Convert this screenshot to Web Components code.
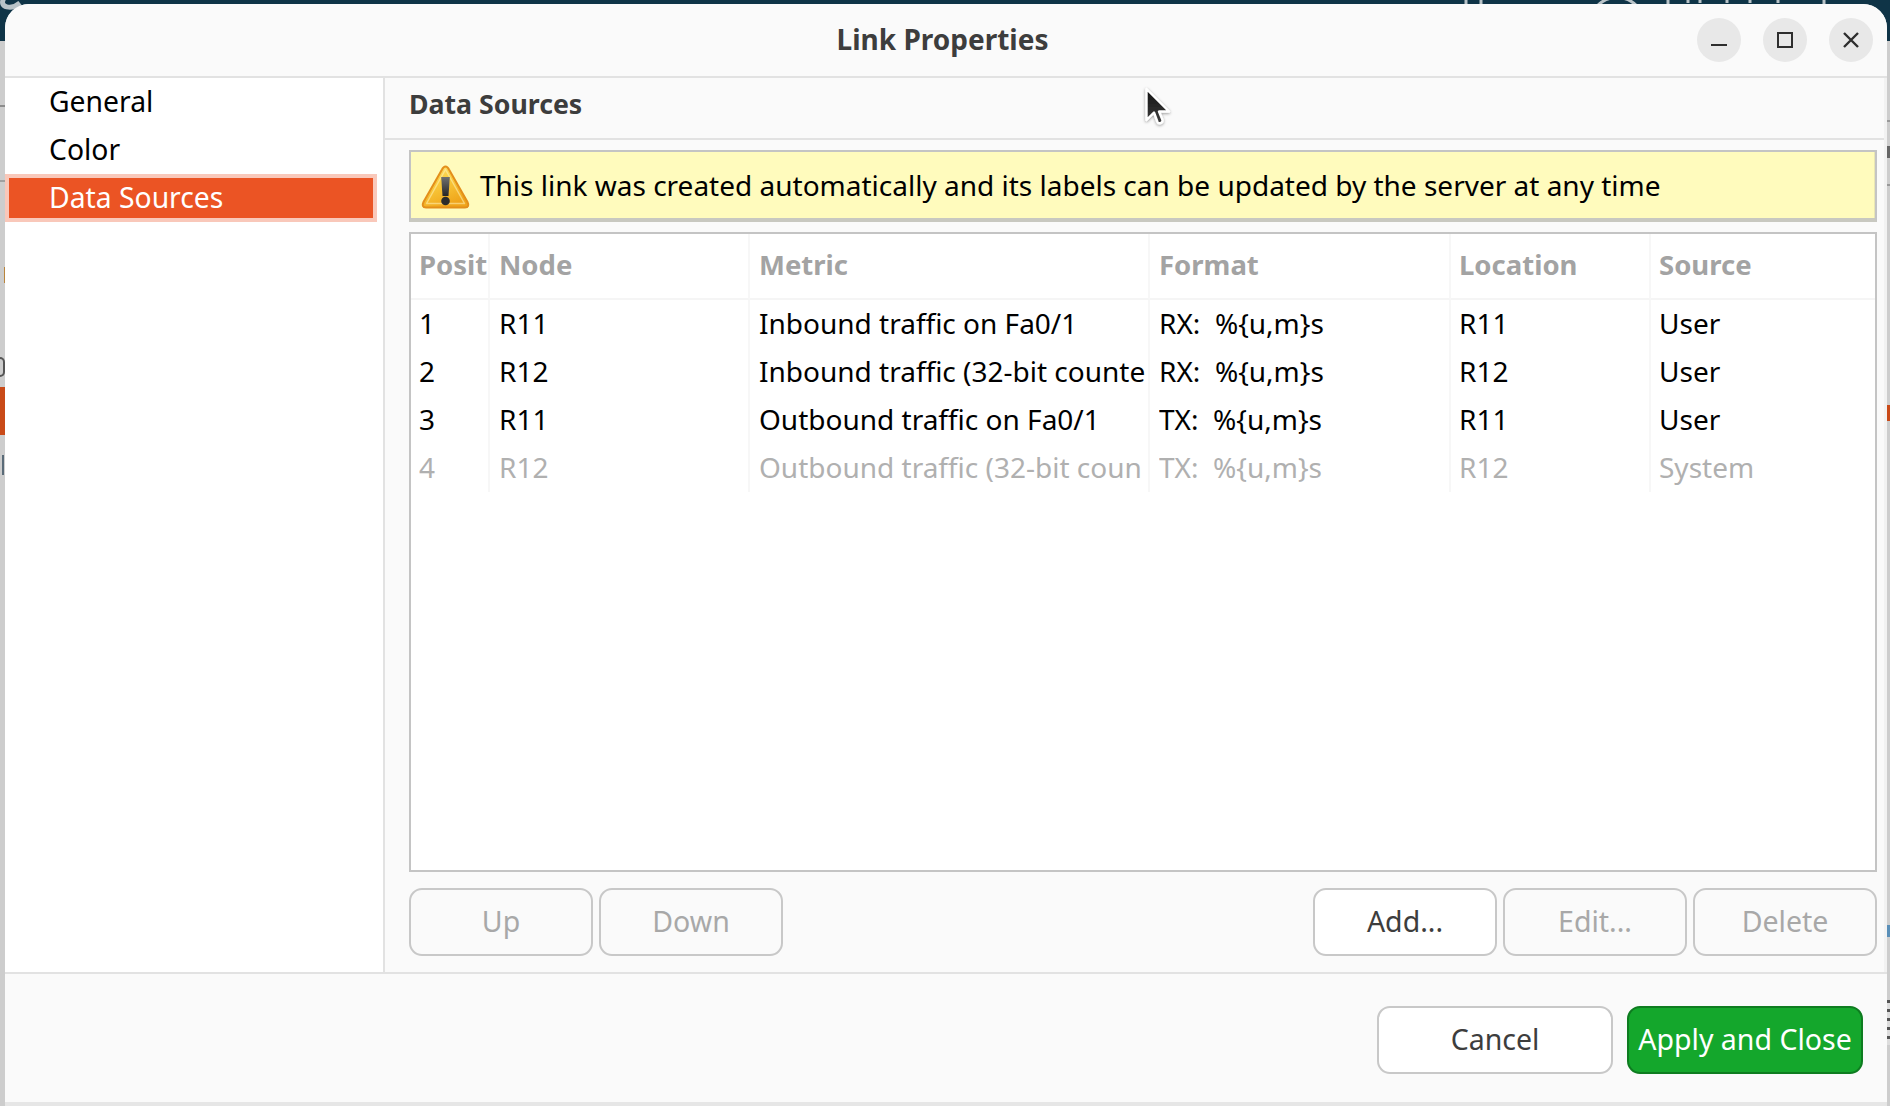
<!doctype html>
<html><head><meta charset="utf-8"><style>
html,body{margin:0;padding:0;height:100%;overflow:hidden}
body{font-family:"Noto Sans",sans-serif;background:#cdcdcd}
</style></head><body>
<app-desktop>
<link-dialog>
<win-titlebar slot="title">Link Properties</win-titlebar>
<nav-item slot="nav">General</nav-item>
<nav-item slot="nav">Color</nav-item>
<nav-item slot="nav" active>Data Sources</nav-item>
<panel-head slot="head">Data Sources</panel-head>
<warn-banner slot="banner">This link was created automatically and its labels can be updated by the server at any time</warn-banner>
<data-table slot="table"></data-table>
<ui-button slot="left" disabled>Up</ui-button>
<ui-button slot="left" disabled>Down</ui-button>
<ui-button slot="right">Add...</ui-button>
<ui-button slot="right" disabled>Edit...</ui-button>
<ui-button slot="right" disabled>Delete</ui-button>
<ui-button slot="foot" large>Cancel</ui-button>
<ui-button slot="foot" large primary>Apply and Close</ui-button>
</link-dialog>
</app-desktop>
<script>
function def(name,html,setup){customElements.define(name,class extends HTMLElement{constructor(){super();this.attachShadow({mode:'open'}).innerHTML=html;}connectedCallback(){setup&&setup.call(this,this.shadowRoot)}})}

def('app-desktop',`<style>
:host{display:block;position:relative;width:1890px;height:1106px;overflow:hidden;box-sizing:border-box;padding:4px 3px 0 5px;
background:linear-gradient(#0f3447 0,#0f3447 41px,#cdcdcd 41px)}
.bit{position:absolute;left:0;width:5px}
.or{top:387px;height:48px;background:#c94a18}
.a{top:105px;height:2px;background:#8c8c8c}
.b{top:180px;height:2px;background:#a0a0a0}
.c{top:357px;height:16px;border:2px solid #555;border-left:0;width:3px;border-radius:0 6px 6px 0}
.d{top:455px;height:20px;background:#5a6b78;width:2px;left:2px}
.e{top:267px;height:16px;background:#b8843c;width:1px;left:4px}
.r{position:absolute;right:0;width:3px}
svg.top{position:absolute;left:0;top:0}
</style>
<div class="bit or"></div><div class="bit a"></div><div class="bit b"></div><div class="bit c"></div><div class="bit d"></div><div class="bit e"></div>
<div class="r" style="top:120px;height:2px;background:#999"></div>
<div class="r" style="top:146px;height:12px;background:#666"></div>
<div class="r" style="top:184px;height:2px;background:#999"></div>
<div class="r" style="top:405px;height:16px;background:#c94a18"></div>
<div class="r" style="top:925px;height:12px;background:#5a8fb8"></div>
<div class="r" style="top:1000px;height:45px;background:repeating-linear-gradient(#555 0 3px,#ddd 3px 9px)"></div>
<svg class="top" width="1890" height="12" viewBox="0 0 1890 12" fill="none" stroke="#b9c3c8" stroke-width="3">
<path d="M4 -2C-2 8 12 10 20 3" stroke-width="5"/>
<path d="M1597 6a28 28 0 0 1 40 0"/>
<path d="M1466 0v4M1481 0v4M1668 0v4M1688 0v3M1700 0v3M1727 0v3M1750 0v3M1778 0v3M1824 0v4"/>
</svg>
<slot></slot>`);

def('link-dialog',`<style>
:host{display:flex;flex-direction:column;width:1882px;height:1102px;box-sizing:border-box;background:#fafafa;border-radius:24px 24px 0 0;overflow:hidden;border-bottom:4px solid #e6e6e6}
.body{flex:none;height:894px;display:flex;border-bottom:2px solid #e2e2e2}
.side{flex:none;width:378px;background:#fff;border-right:2px solid #e2e2e2}
.main{flex:1;display:flex;flex-direction:column;min-width:0;border-right:3px solid #f2f2f2}
.pad{padding:10px 7px 0 24px;display:flex;flex-direction:column}
.acts{display:flex;justify-content:space-between;margin-top:16px}
.grp{display:flex;gap:6px}
.foot{flex:1;display:flex;justify-content:flex-end;align-items:flex-start;gap:14px;padding:32px 24px 0 0}
::slotted([slot=table]){height:640px;margin-top:10px}
</style>
<slot name="title"></slot>
<div class="body">
<div class="side"><slot name="nav"></slot></div>
<div class="main"><slot name="head"></slot>
<div class="pad"><slot name="banner"></slot><slot name="table"></slot>
<div class="acts"><div class="grp"><slot name="left"></slot></div><div class="grp"><slot name="right"></slot></div></div></div>
</div></div>
<div class="foot"><slot name="foot"></slot></div>`);

def('win-titlebar',`<style>
:host{flex:none;display:block;position:relative;height:74px;box-sizing:border-box;border-bottom:2px solid #e2e2e2;background:#fafafa}
.t{display:flex;height:100%;align-items:center;justify-content:center;font:700 28px/1 "Noto Sans",sans-serif;color:#3d3d3d;padding-right:7px;padding-bottom:2px;box-sizing:border-box}
.btns{position:absolute;right:14px;top:14px;display:flex;gap:22px}
.b{width:44px;height:44px;border-radius:50%;background:#e8e8e8;display:flex;align-items:center;justify-content:center}
svg{display:block}
</style><div class="t"><slot></slot></div>
<div class="btns">
<div class="b"><svg width="44" height="44" fill="none" stroke="#2e2e2e" stroke-width="2"><path d="M14 27h16"/></svg></div>
<div class="b"><svg width="44" height="44" fill="none" stroke="#2e2e2e" stroke-width="2"><rect x="15" y="15" width="14" height="14"/></svg></div>
<div class="b"><svg width="44" height="44" fill="none" stroke="#2e2e2e" stroke-width="2.4"><path d="M15 15l14 14M29 15l-14 14"/></svg></div>
</div>`);

def('nav-item',`<style>
:host{display:block;height:48px;box-sizing:border-box;margin-right:6px;padding-left:44px;font:400 28.3px/46px "Noto Sans",sans-serif;color:#000;white-space:nowrap}
:host([active]){background:#eb5424;color:#fff;border:4px solid #f9c8ba;padding-left:40px;line-height:38px}
</style><slot></slot>`);

def('panel-head',`<style>
:host{flex:none;display:block;height:62px;box-sizing:border-box;border-bottom:2px solid #e2e2e2;padding-left:24px;font:700 26.7px/52px "Noto Sans",sans-serif;color:#3d3d3d}
</style><slot></slot>`);

def('warn-banner',`<style>
:host{flex:none;display:flex;align-items:center;height:72px;box-sizing:border-box;background:#fffbbd;border:2px solid #c4c4c4;border-bottom-width:4px;border-bottom-color:#c8c8c0;box-shadow:inset -1px 0 #e9e6b4;font:400 28px/1 "Noto Sans",sans-serif;color:#000;white-space:nowrap}
svg{flex:none;margin:4px 10px 0 10px;display:block}
.t{position:relative;top:0}
</style>
<svg width="49" height="46" viewBox="0 0 49 46">
<defs><linearGradient id="g" x1="0" y1="0" x2="0.5" y2="1"><stop offset="0" stop-color="#fbe27a"/><stop offset=".45" stop-color="#f9cc3e"/><stop offset="1" stop-color="#efa41a"/></linearGradient>
<linearGradient id="x" x1="0" y1="0" x2="0" y2="1"><stop offset="0" stop-color="#707070"/><stop offset="1" stop-color="#262626"/></linearGradient></defs>
<path d="M24.500 2.500C26 2.500 27 3.500 28 5.500L46.500 38C48 41 47.500 43.500 44 43.500H5C1.500 43.500 1 41 2.500 38L21 5.500C22 3.500 23 2.500 24.500 2.500Z" fill="url(#g)" stroke="#e38f1b" stroke-width="2"/>
<path d="M24.500 5.500L43.500 39.500H5.500Z" fill="none" stroke="#fff3b8" stroke-opacity=".55" stroke-width="1.500" stroke-linejoin="round"/>
<path d="M20.200 13h8.600l-1.300 19h-6z" fill="url(#x)"/>
<circle cx="24.500" cy="37" r="4.300" fill="#2c2c2c"/>
</svg><span class="t"><slot></slot></span>`);

const cols=[['Posit','Node','Metric','Format','Location','Source'],
['1','R11','Inbound traffic on Fa0/1','RX:  %{u,m}s','R11','User'],
['2','R12','Inbound traffic (32-bit counte','RX:  %{u,m}s','R12','User'],
['3','R11','Outbound traffic on Fa0/1','TX:  %{u,m}s','R11','User'],
['4','R12','Outbound traffic (32-bit coun','TX:  %{u,m}s','R12','System']];

def('data-table',`<style>
:host{display:block;box-sizing:border-box;background:#fff;border:2px solid #c4c4c4;overflow:hidden}
.g{display:grid;grid-template-columns:79px 260px 400px 301px 200px 1fr}
.c{white-space:pre;box-sizing:border-box;padding-left:9px;border-right:2px solid #f7f7f7;height:48px;font:400 28px/47px "Noto Sans",sans-serif;color:#000}
.c span{display:block;overflow:hidden;margin-right:0}
.g>.c:nth-child(6n){border-right:0;padding-left:8px}
.g>.c:nth-child(6n+5){padding-left:8px}
.g>.c:nth-child(6n+1){padding-left:8px}
.h{height:66px;border-bottom:2px solid #f5f5f5;font:700 27.5px/62px "Noto Sans",sans-serif;color:#a3a3a3}
.d{color:#b0b0b0}
</style><div class="g"></div>`,function(r){
const g=r.querySelector('.g');
cols.forEach((row,i)=>row.forEach(t=>{const c=document.createElement('div');c.className='c'+(i==0?' h':'')+(i==4?' d':'');const s=document.createElement('span');s.textContent=t;c.appendChild(s);g.appendChild(c);}));
});

def('ui-button',`<style>
:host{display:flex;align-items:center;justify-content:center;box-sizing:border-box;width:184px;height:68px;border:2px solid #c8c8c8;border-radius:13px;background:#fff;color:#3d3d3d;font:400 28.5px/1 "Noto Sans",sans-serif;white-space:nowrap}
:host([disabled]){background:#fafafa;color:#a8a8a8}
:host([large]){width:236px;height:68px}
:host([primary]){background:#14a72c;border-color:#0e7c20;color:#fff}
span{display:block;position:relative;top:-1px}
</style><span><slot></slot></span>`);

def('mouse-cursor',`<style>:host{position:absolute;left:1142px;top:86px;width:32px;height:44px;display:block}</style>
<svg width="32" height="44" viewBox="0 0 32 44"><defs><filter id="s" x="-30%" y="-30%" width="160%" height="160%"><feDropShadow dx="0" dy="1" stdDeviation="1.500" flood-color="#000" flood-opacity=".4"/></filter><linearGradient id="k" x1="0" y1="0" x2="0" y2="1"><stop offset="0" stop-color="#111"/><stop offset="1" stop-color="#3e3e3e"/></linearGradient></defs>
<path d="M4.500 3L4.500 34L12 26.500L15.500 36C16.500 38.500 21 37 20.500 34L17 25.500H27Z" fill="url(#k)" stroke="#fff" stroke-width="2.400" stroke-linejoin="round" filter="url(#s)"/></svg>`);
document.querySelector('app-desktop').appendChild(document.createElement('mouse-cursor'));
</script></body></html>
